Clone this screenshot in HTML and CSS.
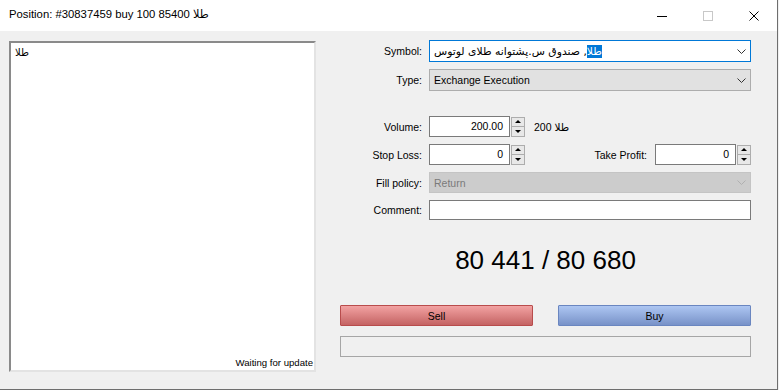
FILE: index.html
```html
<!DOCTYPE html>
<html lang="en">
<head>
  <meta charset="UTF-8" />
  <title>Position</title>
  <link rel="stylesheet" href="styles.css">
</head>
<body>

  <div class="window">
    <div class="titlebar">
      <span class="title">Position: #30837459 buy 100 85400 طلا</span>
      <div class="controls">
        <span class="ctl"><svg width="10" height="10"><line x1="0" y1="5.5" x2="10" y2="5.5" stroke="#000" /></svg></span>
        <span class="ctl"><svg width="10" height="10"><rect x="0.5" y="0.5" width="9" height="9" fill="none" stroke="#c8c8c8" /></svg></span>
        <span class="ctl"><svg width="10" height="10"><path d="M0.5 0.5 L9.5 9.5 M9.5 0.5 L0.5 9.5" stroke="#000" /></svg></span>
      </div>
    </div>

    <div class="content">
      <div class="journal">
        <div class="journal-text">طلا</div>
        <div class="status">Waiting for update</div>
      </div>

      <div class="order">
        <div class="row">
          <span class="lbl">Symbol:</span>
          <div class="combo focus">
            <span class="symbol" dir="rtl"><span class="sel">طلا</span>, صندوق س.پشتوانه طلای لوتوس</span>
            <svg class="arrow" width="9" height="5"><polyline points="0.5,0.5 4.5,4.5 8.5,0.5" fill="none" stroke="#333" /></svg>
          </div>
        </div>

        <div class="row gap-s">
          <span class="lbl">Type:</span>
          <div class="combo grey">
            <span>Exchange Execution</span>
            <svg class="arrow" width="9" height="5"><polyline points="0.5,0.5 4.5,4.5 8.5,0.5" fill="none" stroke="#333" /></svg>
          </div>
        </div>

        <div class="row gap-l">
          <span class="lbl">Volume:</span>
          <div class="num">200.00</div>
          <div class="spin"><span class="up"></span><span class="down"></span></div>
          <span class="unit">200 طلا</span>
        </div>

        <div class="row gap-s">
          <span class="lbl">Stop Loss:</span>
          <div class="num">0</div>
          <div class="spin"><span class="up"></span><span class="down"></span></div>
          <div class="tp">
            <span class="lbl-tp">Take Profit:</span>
            <div class="num">0</div>
            <div class="spin"><span class="up"></span><span class="down"></span></div>
          </div>
        </div>

        <div class="row gap-s">
          <span class="lbl">Fill policy:</span>
          <div class="combo disabled">
            <span>Return</span>
            <svg class="arrow" width="9" height="5"><polyline points="0.5,0.5 4.5,4.5 8.5,0.5" fill="none" stroke="#b0b0b0" /></svg>
          </div>
        </div>

        <div class="row gap-s">
          <span class="lbl">Comment:</span>
          <div class="text-input"></div>
        </div>

        <div class="price">80 441 / 80 680</div>

        <div class="buttons">
          <button class="btn sell">Sell</button>
          <button class="btn buy">Buy</button>
        </div>

        <div class="progress"></div>
      </div>
    </div>
  </div>

</body>
</html>
```

FILE: styles.css
```css
body { margin: 0; background: #f0f0f0; font-family: "Liberation Sans", "DejaVu Sans", sans-serif; font-size: 10.5px; color: #000; }
.window { width: 777px; height: 389px; background: #f0f0f0; border-right: 1px solid #6e6e6e; border-bottom: 1px solid #6e6e6e; overflow: hidden; }

.titlebar { height: 31px; background: #fff; display: flex; align-items: center; justify-content: space-between; }
.title { padding-left: 9px; font-size: 11.3px; padding-bottom: 2px; }
.controls { display: flex; height: 100%; }
.ctl { width: 46px; display: flex; align-items: center; justify-content: center; }

.content { display: flex; padding: 9px 0 0 9px; }

.journal { width: 303px; height: 327px; margin-top: 1px; background: #fff; border-top: 2px solid #8a8a8a; border-left: 2px solid #8a8a8a; border-right: 2px solid #e3e3e3; border-bottom: 2px solid #e3e3e3; display: flex; flex-direction: column; justify-content: space-between; }
.journal-text { padding: 4px 0 0 4px; font-size: 10px; }
.status { text-align: right; font-size: 9.6px; padding: 0 1px 2px 0; }

.order { width: 411px; margin-left: 24px; }
.row { display: flex; align-items: center; }
.gap-s { margin-top: 7px; }
.gap-l { margin-top: 25px; }
.lbl { width: 89px; padding-right: 7px; text-align: right; box-sizing: border-box; flex-shrink: 0; }

.combo { flex: 1; height: 22px; box-sizing: border-box; border: 1px solid #adadad; display: flex; align-items: center; justify-content: space-between; padding: 0 4px 0 4px; }
.combo.focus { background: #fff; border-color: #0078d7; }
.combo.grey { background: #e1e1e1; }
.combo.disabled { background: #cccccc; border-color: #c4c4c4; color: #7a7a7a; height: 21px; }
.sel { background: #0078d7; color: #fff; }
.symbol { font-family: "DejaVu Sans", sans-serif; font-size: 10.8px; }

.num { width: 81px; height: 21px; box-sizing: border-box; border: 1px solid #7a7a7a; background: #fff; text-align: right; padding: 0 6px; line-height: 19px; }
.spin { width: 14px; height: 20px; margin-left: 1px; box-sizing: border-box; border: 1px solid #adadad; background: #e8e8e8; display: flex; flex-direction: column; }
.spin span { flex: 1; display: flex; align-items: center; justify-content: center; }
.spin .up { border-bottom: 1px solid #adadad; }
.spin .up::after { content: ""; border-left: 3px solid transparent; border-right: 3px solid transparent; border-bottom: 3px solid #000; }
.spin .down::after { content: ""; border-left: 3px solid transparent; border-right: 3px solid transparent; border-top: 3px solid #000; }
.unit { margin-left: 9px; }

.tp { margin-left: auto; display: flex; align-items: center; }
.lbl-tp { margin-right: 8px; }

.text-input { flex: 1; height: 20px; box-sizing: border-box; border: 1px solid #7a7a7a; background: #fff; }

.price { margin-top: 25px; height: 30px; line-height: 30px; text-align: center; font-size: 26px; }

.buttons { display: flex; justify-content: space-between; margin-top: 30px; }
.btn { width: 193px; height: 21px; font-family: inherit; font-size: 10.5px; color: #000; border-radius: 1px; padding: 0; }
.sell { background: linear-gradient(#f2a2a2, #c46363); border: 1px solid #b84c4c; }
.buy { background: linear-gradient(#adc6f2, #7892c8); border: 1px solid #6a86c0; }

.progress { margin-top: 10px; height: 21px; box-sizing: border-box; border: 1px solid #a6a6a6; background: #f0f0f0; }
```
